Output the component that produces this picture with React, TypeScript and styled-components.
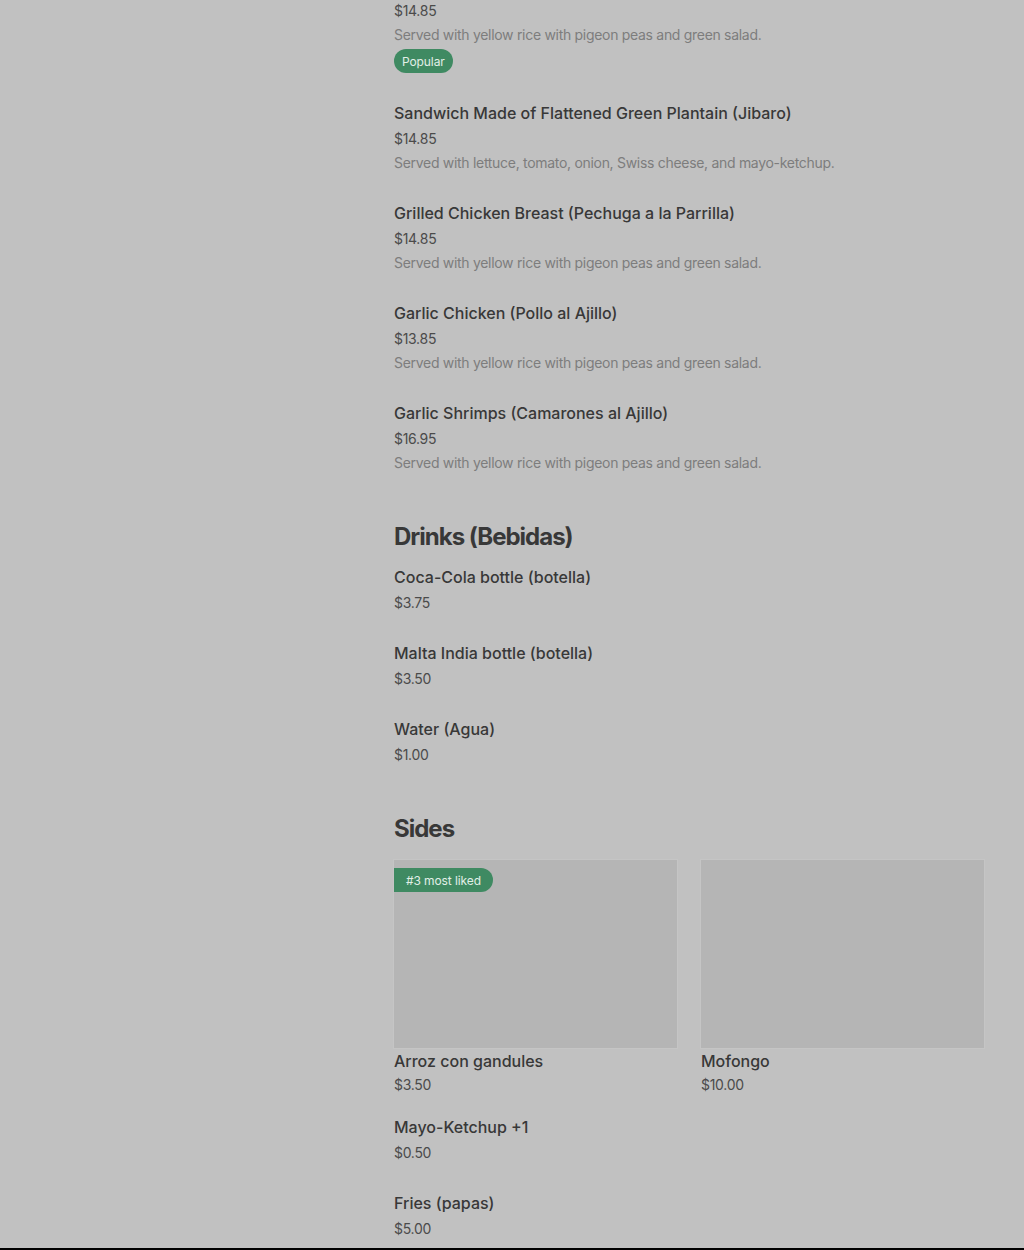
import styled, { createGlobalStyle } from 'styled-components';

const GlobalStyle = createGlobalStyle`
  html, body {
    margin: 0;
    padding: 0;
    background: #000;
  }
  body {
    font-family: Inter, "Noto Sans", "Liberation Sans", sans-serif;
    -webkit-font-smoothing: antialiased;
  }
`;

type Item = {
  name?: string;
  price: string;
  desc?: string;
  badge?: string;
};

const mains: Item[] = [
  {
    price: '$14.85',
    desc: 'Served with yellow rice with pigeon peas and green salad.',
    badge: 'Popular',
  },
  {
    name: 'Sandwich Made of Flattened Green Plantain (Jibaro)',
    price: '$14.85',
    desc: 'Served with lettuce, tomato, onion, Swiss cheese, and mayo-ketchup.',
  },
  {
    name: 'Grilled Chicken Breast (Pechuga a la Parrilla)',
    price: '$14.85',
    desc: 'Served with yellow rice with pigeon peas and green salad.',
  },
  {
    name: 'Garlic Chicken (Pollo al Ajillo)',
    price: '$13.85',
    desc: 'Served with yellow rice with pigeon peas and green salad.',
  },
  {
    name: 'Garlic Shrimps (Camarones al Ajillo)',
    price: '$16.95',
    desc: 'Served with yellow rice with pigeon peas and green salad.',
  },
];

const drinks: Item[] = [
  { name: 'Coca-Cola bottle (botella)', price: '$3.75' },
  { name: 'Malta India bottle (botella)', price: '$3.50' },
  { name: 'Water (Agua)', price: '$1.00' },
];

const sideCards: Item[] = [
  { name: 'Arroz con gandules', price: '$3.50', badge: '#3 most liked' },
  { name: 'Mofongo', price: '$10.00' },
];

const sides: Item[] = [
  { name: 'Mayo-Ketchup +1', price: '$0.50' },
  { name: 'Fries (papas)', price: '$5.00' },
];

// grey modal backdrop over the scrolled menu
const Backdrop = styled.div`
  height: 1248px;
  overflow: hidden;
  background: #c1c1c1;
`;

const Column = styled.main`
  width: 590px;
  margin: -3px 0 0 394px;
  display: flex;
  flex-direction: column;
`;

const Section = styled.section`
  display: flex;
  flex-direction: column;
  margin-bottom: 20px;
`;

const Heading = styled.h2`
  margin: 0 0 12px;
  font-size: 24px;
  line-height: 32px;
  font-weight: 700;
  letter-spacing: -1px;
  color: #383838;
`;

const List = styled.div`
  display: flex;
  flex-direction: column;
`;

const Row = styled.div`
  display: flex;
  flex-direction: column;
  align-items: flex-start;
  padding-bottom: 28px;
`;

const Name = styled.div`
  font-size: 16px;
  line-height: 24px;
  font-weight: 500;
  color: #383838;
`;

const Price = styled.div<{ $tight?: boolean }>`
  margin-top: ${(p) => (p.$tight ? '2px' : '4px')};
  font-size: 14px;
  line-height: 20px;
  color: #4b4b4b;
  letter-spacing: -0.3px;
`;

const Desc = styled.div`
  margin-top: 4px;
  font-size: 14px;
  line-height: 20px;
  color: #7d7d7d;
  letter-spacing: -0.3px;
`;

const Pill = styled.span`
  margin-top: 4px;
  height: 24px;
  padding: 0 8px;
  display: inline-flex;
  align-items: center;
  border-radius: 12px;
  background: #3f8a62;
  color: #e2efe7;
  font-size: 12px;
  letter-spacing: -0.1px;
`;

const Grid = styled.div`
  margin: 3px 0 20px;
  display: grid;
  grid-template-columns: 1fr 1fr;
  gap: 24px;
`;

const Card = styled.div`
  display: flex;
  flex-direction: column;
`;

const Thumb = styled.div`
  position: relative;
  height: 188px;
  background: #b5b5b5;
  box-shadow: 0 0 0 1px #c5c5c5;
  margin-bottom: 1px;
`;

const Ribbon = styled.span`
  position: absolute;
  top: 8px;
  left: 0;
  height: 24px;
  padding: 0 12px;
  display: inline-flex;
  align-items: center;
  border-radius: 0 12px 12px 0;
  background: #3f8a62;
  color: #e2efe7;
  font-size: 12px;
  letter-spacing: -0.1px;
`;

const renderRow = (it: Item, i: number) => (
  <Row key={i}>
    {it.name && <Name>{it.name}</Name>}
    <Price>{it.price}</Price>
    {it.desc && <Desc>{it.desc}</Desc>}
    {it.badge && <Pill>{it.badge}</Pill>}
  </Row>
);

export default function App() {
  return (
    <>
      <GlobalStyle />
      <Backdrop>
        <Column>
          <Section>
            <List>{mains.map(renderRow)}</List>
          </Section>

          <Section>
            <Heading>Drinks (Bebidas)</Heading>
            <List>{drinks.map(renderRow)}</List>
          </Section>

          <Section>
            <Heading>Sides</Heading>
            <Grid>
              {sideCards.map((c, i) => (
                <Card key={i}>
                  <Thumb>{c.badge && <Ribbon>{c.badge}</Ribbon>}</Thumb>
                  <Name>{c.name}</Name>
                  <Price $tight>{c.price}</Price>
                </Card>
              ))}
            </Grid>
            <List>{sides.map(renderRow)}</List>
          </Section>
        </Column>
      </Backdrop>
    </>
  );
}
